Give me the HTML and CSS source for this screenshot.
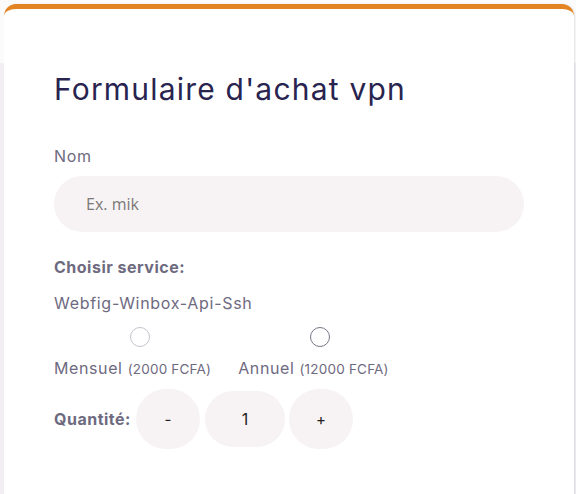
FILE: index.html
```html
<!DOCTYPE html>
<html lang="fr">
<head>
<meta charset="utf-8">
<title>Formulaire d'achat vpn</title>
<link rel="stylesheet" href="styles.css">
</head>
<body>
<div class="page">
  <form class="card">
    <h1 class="title">Formulaire d'achat vpn</h1>
    <label class="label" for="nom">Nom</label>
    <input class="text-input" id="nom" type="text" placeholder="Ex. mik">
    <p class="section-label">Choisir service:</p>
    <p class="service">Webfig-Winbox-Api-Ssh</p>
    <div class="options">
      <label class="option option-month">
        <span class="radio"></span>
        <span class="option-text">Mensuel <small>(2000 FCFA)</small></span>
      </label>
      <label class="option option-year">
        <span class="radio radio-dark"></span>
        <span class="option-text">Annuel <small>(12000 FCFA)</small></span>
      </label>
    </div>
    <div class="qty">
      <span class="qty-label">Quantité:</span>
      <button type="button" class="qty-btn">-</button>
      <span class="qty-value">1</span>
      <button type="button" class="qty-btn">+</button>
    </div>
  </form>
</div>
</body>
</html>
```

FILE: styles.css
```css
* { box-sizing: border-box; }
html, body { margin: 0; padding: 0; }
body {
  background: linear-gradient(#fbfbfb 0, #fbfbfb 63px, #f1eff2 63px);
  font-family: "Inter", "Noto Sans", sans-serif;
  color: #6e6a80;
  height: 494px;
  overflow: hidden;
}
.page {
  padding: 4px 2px 0 4px;
}
.card {
  background: #fff;
  border-top: 5px solid #e38423;
  border-radius: 12px 12px 0 0;
  box-shadow: 1px 0 2px rgba(120, 110, 140, 0.18);
  padding: 60px 50px 60px 50px;
  min-height: 520px;
}
.title {
  margin: 0 0 36px;
  font-size: 30px;
  font-weight: 400;
  color: #29244f;
  line-height: 40px;
  letter-spacing: 1.2px;
}
.label {
  display: block;
  font-size: 16px;
  line-height: 22px;
  letter-spacing: 0.7px;
  margin-bottom: 9px;
}
.text-input {
  display: block;
  width: 470px;
  height: 56px;
  border: none;
  border-radius: 28px;
  background: #f7f3f4;
  padding: 0 32px;
  font-family: "Open Sans", sans-serif;
  font-size: 16px;
  color: #333;
  outline: none;
}
.text-input::placeholder { color: #7a7878; }
.section-label {
  margin: 24px 0 0;
  font-size: 16px;
  font-weight: 700;
  line-height: 22px;
  letter-spacing: 0.5px;
}
.service {
  margin: 14px 0 0;
  font-size: 16px;
  line-height: 22px;
  letter-spacing: 0.7px;
}
.options {
  display: flex;
  gap: 27px;
  margin-top: 13px;
}
.option {
  display: flex;
  flex-direction: column;
  align-items: center;
}
.radio {
  width: 20px;
  height: 20px;
  border-radius: 50%;
  border: 1.5px solid #c5c3cb;
  margin-left: 14px;
  margin-bottom: 10px;
}
.radio-dark { border-color: #7a7688; }
.option-text {
  font-size: 16px;
  line-height: 22px;
  letter-spacing: 0.6px;
  white-space: nowrap;
}
.option-text small { font-size: 13.5px; letter-spacing: 0.2px; }
.qty {
  display: flex;
  align-items: center;
  margin-top: 9px;
}
.qty-label {
  font-size: 16px;
  font-weight: 700;
  letter-spacing: 0.5px;
  margin-right: 5px;
}
.qty-btn {
  width: 64px;
  height: 60px;
  border: none;
  border-radius: 30px;
  background: #f7f3f4;
  font-family: "Inter", sans-serif;
  font-size: 15px;
  color: #222;
  padding: 0;
}
.qty-value {
  width: 80px;
  height: 56px;
  border-radius: 28px;
  background: #f7f3f4;
  margin: 0 4px 0 5px;
  display: flex;
  align-items: center;
  justify-content: center;
  font-size: 16px;
  color: #222;
}
```
